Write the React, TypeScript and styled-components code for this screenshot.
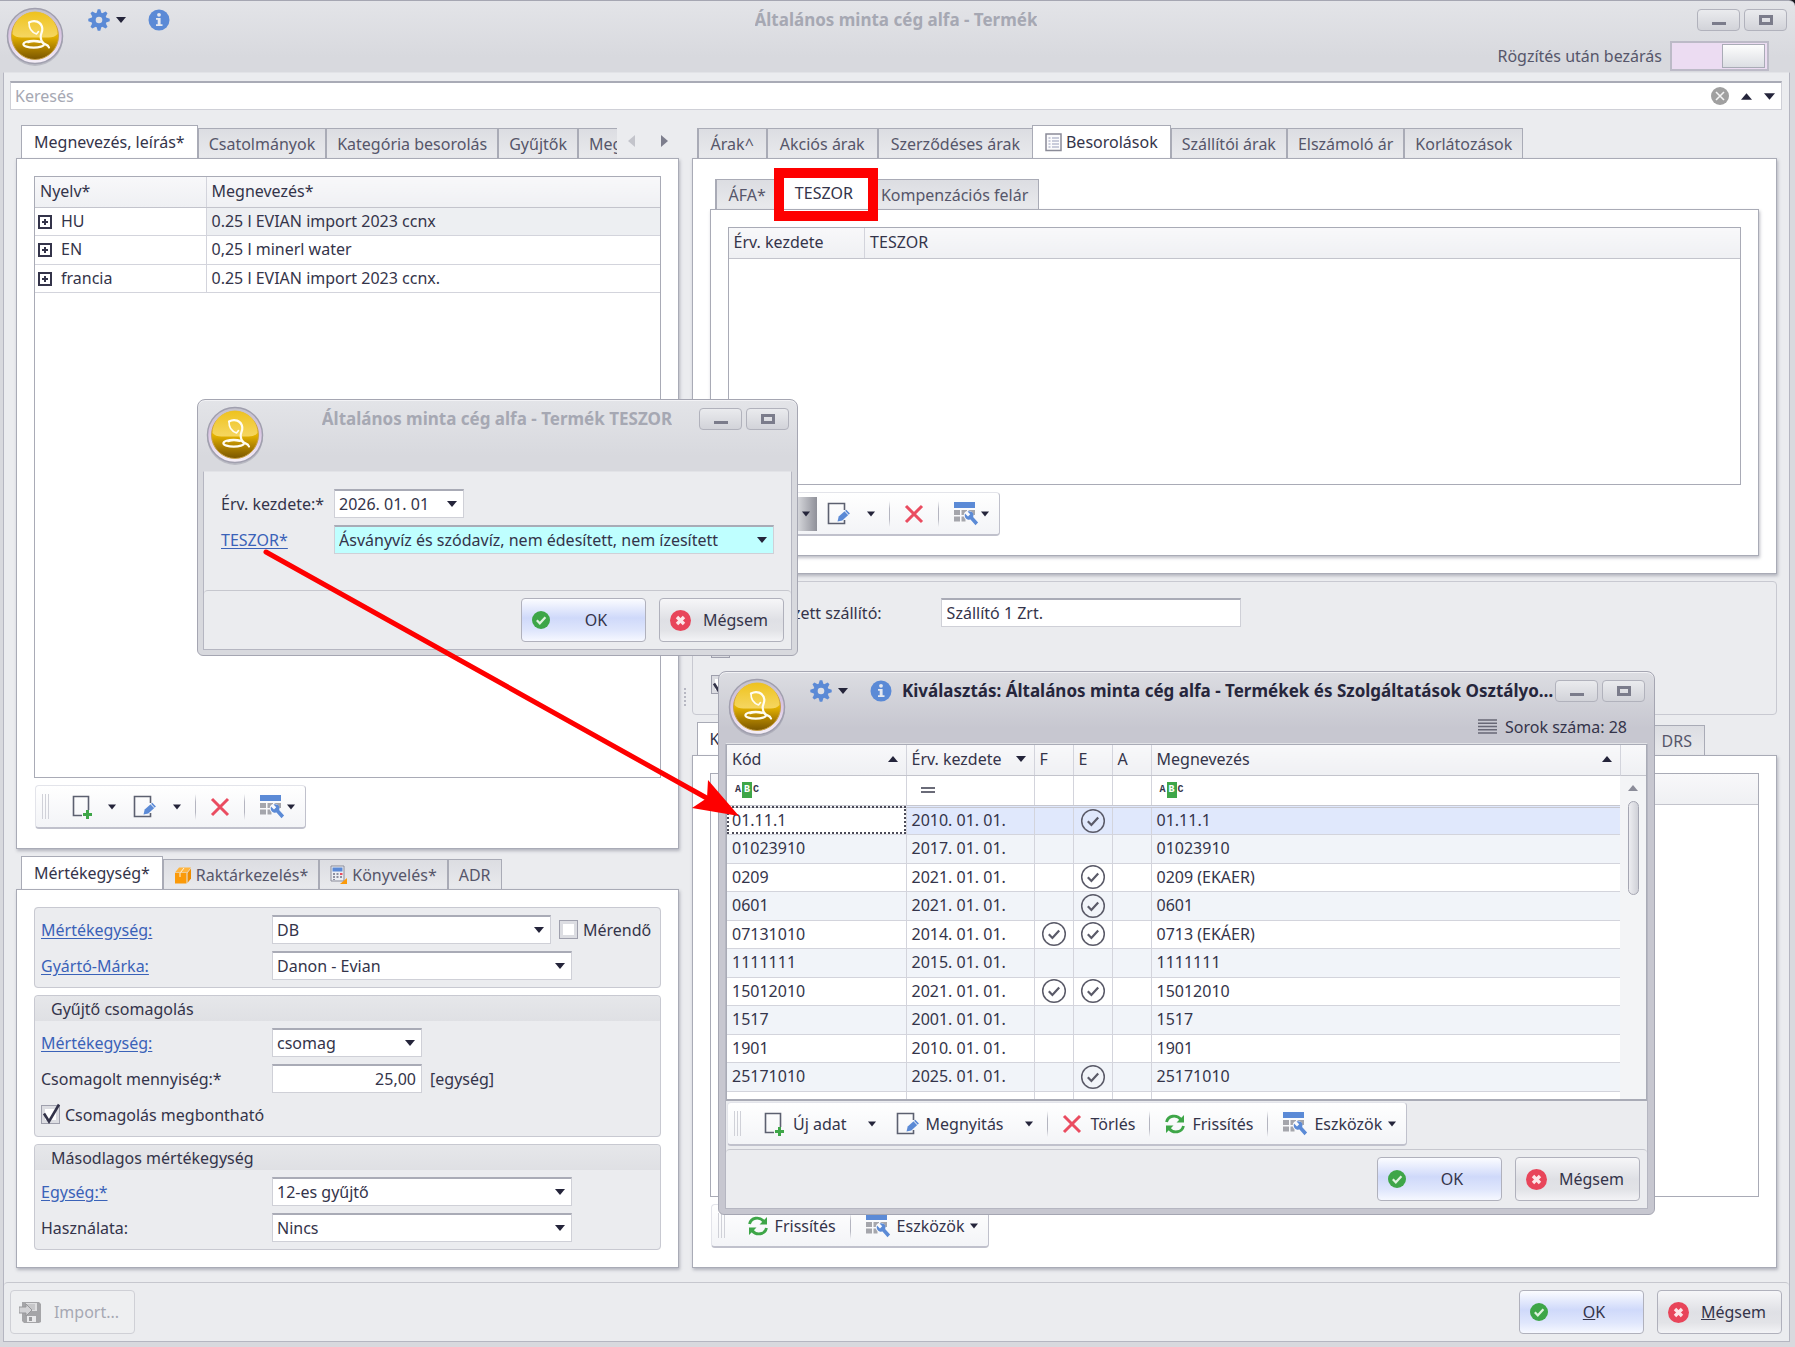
import React, { useId } from "react";
import styled, { createGlobalStyle, css } from "styled-components";

const c = {
  text: "#34344a",
  soft: "#56566a",
  muted: "#a6a8b3",
  line: "#a9abb6",
  thin: "#d3d4dc",
  face: "#ebecef",
  link: "#3a62b8",
  blue: "#5b8ad6",
  green: "#3ea648",
  red: "#ea4c60",
};

const Global = createGlobalStyle`
  *, *::before, *::after { box-sizing: border-box; }
  body { margin: 0; background: #16161c; }
  body, button, input, select {
    font-family: Tahoma, "Noto Sans", "Open Sans", sans-serif;
    font-size: 16px;
    line-height: 20px;
    color: ${c.text};
  }
  button, input, select { margin: 0; }
`;

/* ---------- icons ---------- */

const Svg = styled.svg`
  display: block;
  flex: none;
`;

const Caret = ({ up = false, size = 10, color = "#24243a" }: { up?: boolean; size?: number; color?: string }) => (
  <Svg width={size} height={size} viewBox="0 0 10 10" fill={color} aria-hidden="true">
    <path d={up ? "M0 8 5 2l5 6z" : "M0 2h10L5 8z"} />
  </Svg>
);

const SideCaret = ({ left = false }: { left?: boolean }) => (
  <Svg width="7" height="14" viewBox="0 0 7 14" fill={left ? "#c3c4cb" : "#7d7e8d"} aria-hidden="true">
    <path d={left ? "M7 1v12L0 7z" : "M0 1v12l7-6z"} />
  </Svg>
);

const GearIcon = () => (
  <Svg width="22" height="22" viewBox="-11 -11 22 22" aria-hidden="true">
    <g fill={c.blue}>
      {[0, 45, 90, 135].map((a) => (
        <path key={a} transform={`rotate(${a})`} d="M-2.4-7-1.3-10.7h2.6L2.4-7v14L1.3 10.7h-2.6L-2.4 7z" />
      ))}
      <circle r="7.6" />
    </g>
    <circle r="3.3" fill="#dedfe4" />
  </Svg>
);

const InfoIcon = () => (
  <Svg width="22" height="22" viewBox="0 0 22 22" aria-hidden="true">
    <circle cx="11" cy="11" r="10.5" fill={c.blue} />
    <circle cx="11" cy="5.8" r="1.9" fill="#e6e9f0" />
    <path d="M8 9h4.600v6.200H14.500V17H8v-1.800h1.700v-4.400H8z" fill="#e6e9f0" />
  </Svg>
);

const Logo = () => {
  const id = useId().replace(/[^a-zA-Z0-9]/g, "");
  return (
    <Svg width="60" height="62" viewBox="0 0 60 62" aria-hidden="true">
      <defs>
        <linearGradient id={`rim${id}`} x1="0" y1="0" x2="0" y2="1">
          <stop offset="0" stopColor="#c3c3cc" />
          <stop offset=".45" stopColor="#d9c4e2" />
          <stop offset="1" stopColor="#f6f0f8" />
        </linearGradient>
        <linearGradient id={`gold${id}`} x1="0" y1="0" x2="0" y2="1">
          <stop offset="0" stopColor="#e2b422" />
          <stop offset=".5" stopColor="#e6b400" />
          <stop offset=".72" stopColor="#b48600" />
          <stop offset="1" stopColor="#7a5600" />
        </linearGradient>
        <linearGradient id={`shine${id}`} x1="0" y1="0" x2="0" y2="1">
          <stop offset="0" stopColor="#f0c41c" />
          <stop offset="1" stopColor="#f7da6c" />
        </linearGradient>
      </defs>
      <circle cx="30" cy="32" r="28" fill="#8d8d9a" opacity=".4" />
      <circle cx="30" cy="30" r="27.500" fill={`url(#rim${id})`} stroke="#a09fae" strokeWidth="1.500" />
      <circle cx="30" cy="30" r="23.500" fill={`url(#gold${id})`} stroke="#c9a24a" />
      <path d="M7.500 28a22.500 22.500 0 0 1 45 0q-3 3.500-9 3.500h-27q-6 0-9-3.500z" fill={`url(#shine${id})`} opacity=".9" />
      <g fill="none" stroke="#fffdf2" strokeLinecap="round" strokeLinejoin="round">
        <path d="M24 16.500c5-2.800 12.300-1.500 13.300 6 .4 3.500-2 5.500-1.600 8.500.2 3 .8 5 2.800 6.500 2 1.300 4.500.8 5.500 4" strokeWidth="2.200" />
        <path d="M24 16.500c-.2 5.500 2.200 9.500 7.500 11.500l2-2.500" strokeWidth="1.600" />
        <ellipse cx="28.700" cy="38.200" rx="10.300" ry="3.400" strokeWidth="2.200" />
        <path d="M23 36.500q5-1.600 12-.3" strokeWidth="1.400" />
      </g>
    </Svg>
  );
};

const NewIcon = () => (
  <Svg width="24" height="26" viewBox="0 0 24 26" fill="none" aria-hidden="true">
    <path d="M11 21.500H2.500V2.500h15V16" stroke="#5c6070" strokeWidth="1.600" />
    <path d="M16.500 16v9M12 20.500h9" stroke={c.green} strokeWidth="3" />
  </Svg>
);

const EditIcon = () => (
  <Svg width="24" height="26" viewBox="0 0 24 26" fill="none" aria-hidden="true">
    <path d="M17.500 9V2.500h-16v20h16V19" stroke="#5c6070" strokeWidth="1.600" />
    <path d="m10.500 20.500 1.200-5 7.600-6.800 3.600 3.800-7.600 6.900z" fill={c.blue} />
    <path d="m17.700 10 3.700 3.900" stroke="#fff" />
  </Svg>
);

const DeleteIcon = () => (
  <Svg width="20" height="20" viewBox="0 0 20 20" aria-hidden="true">
    <path d="m2 2 16 16M18 2 2 18" stroke={c.red} strokeWidth="3" />
  </Svg>
);

const ToolsIcon = () => (
  <Svg width="26" height="26" viewBox="0 0 26 26" aria-hidden="true">
    <path d="M1 1h21v6H1z" fill={c.blue} />
    <path d="M1 9h6v5H1zM8.500 9H14v5H8.500zM15.500 9H22v5h-6.500zM1 15.500h6v5H1zM8.500 15.500h4v5h-4z" fill="#a5a6ac" />
    <circle cx="15.500" cy="14.500" r="4.800" fill="#fafafc" />
    <path d="M12 12.500 15 15.500l2.200-2.300-2.700-2.800c4.500-1.200 7 2.200 5.600 5.600l5 5.600-2.600 2.600-5-5.600C14 19.500 10.700 16.500 12 12.500z" fill={c.blue} />
  </Svg>
);

const RefreshIcon = () => (
  <Svg width="22" height="22" viewBox="0 0 22 22" fill="none" aria-hidden="true">
    <path d="M2.500 9C4 2.500 12.500 1 17 6.500M19.500 13C18 19.500 9.500 21 5 15.500" stroke={c.green} strokeWidth="2.800" />
    <path d="M20 2v7.500h-7.500zM2 20v-7.500h7.500z" fill={c.green} />
  </Svg>
);

const OkIcon = () => (
  <Svg width="18" height="18" viewBox="0 0 18 18" fill="none" aria-hidden="true">
    <circle cx="9" cy="9" r="9" fill={c.green} />
    <path d="m4.800 9.300 3 3 5.600-6" stroke="#dff3df" strokeWidth="2.200" />
  </Svg>
);

const CancelIcon = () => (
  <Svg width="21" height="21" viewBox="0 0 21 21" fill="none" aria-hidden="true">
    <circle cx="10.500" cy="10.500" r="10.500" fill="#e8455a" />
    <path d="m7 7 7 7M14 7l-7 7" stroke="#fde6e8" strokeWidth="3.400" />
  </Svg>
);

const ClearIcon = () => (
  <Svg width="18" height="18" viewBox="0 0 18 18" aria-hidden="true">
    <circle cx="9" cy="9" r="9" fill="#a0a0a0" />
    <path d="m5 5 8 8M13 5l-8 8" stroke="#f4f4f4" strokeWidth="1.600" />
  </Svg>
);

const CenteredSvg = styled(Svg)`
  margin: 0 auto;
`;

const CheckCircle = () => (
  <CenteredSvg width="26" height="26" viewBox="0 0 26 26" fill="none" stroke="#5a5a68" role="img" aria-label="igen">
    <circle cx="13" cy="13" r="11.300" strokeWidth="1.500" />
    <path d="m7.800 13.300 3.600 3.700 6.800-7.600" strokeWidth="2.200" />
  </CenteredSvg>
);

const ListIcon = () => (
  <Svg width="17" height="19" viewBox="0 0 17 19" fill="none" aria-hidden="true">
    <path d="M1 1h15v16.500H1z" fill="#fbfbfd" stroke="#8a8b98" strokeWidth="1.500" />
    <path d="M3.500 5h2M3.500 8h2M3.500 11h2M3.500 14h2M7 5h7M7 8h7M7 11h7M7 14h7" stroke="#b9bdd0" strokeWidth="1.400" />
  </Svg>
);

const BoxIcon = () => (
  <Svg width="18" height="18" viewBox="0 0 18 18" aria-hidden="true">
    <path d="M1 6.500 5 1.500h12l-4 5z" fill="#ffb43d" />
    <path d="M1 7h11.500v10.500H1z" fill="#fb9a09" />
    <path d="M13.500 7 17 2.500v10L13.500 17z" fill="#ee8c00" />
    <path d="M6 7v4M6.500 6.500 10 2" stroke="#fff3dd" />
  </Svg>
);

const CalcIcon = () => (
  <Svg width="18" height="20" viewBox="0 0 18 20" aria-hidden="true">
    <path d="M1 1h13v15H1z" fill="#eceef3" stroke="#8b8d9b" />
    <path d="M2.500 2.500h10v4h-10z" fill={c.blue} />
    <path d="M3 8h2v2H3zM6.500 8h2v2h-2zM3 11h2v2H3zM6.500 11h2v2h-2zM10 11h2v2h-2zM3 14h2v1H3z" fill="#8d90a0" />
    <path d="M10 8h2.500v2H10z" fill={c.red} />
    <path d="M17 13v6h-7z" fill="#fb9a09" />
  </Svg>
);

const ImportIcon = () => (
  <Svg width="23" height="23" viewBox="0 0 23 23" aria-hidden="true">
    <path d="M3 1h17l2 2v18l-2 1H5l-2-2z" fill="#a5a5a8" />
    <path d="M7 2h11v8H7z" fill="#dedee0" />
    <path d="M8 4h8M8 6h8M8 8h8" stroke="#b0b0b3" />
    <path d="M8 15h9v6H8z" fill="#e9e9eb" />
    <path d="M10 16h3v4h-3z" fill="#9a9a9d" />
    <path d="M0 6h7V3l6 6-6 6v-3H0z" fill="#d2d2d5" stroke="#97979a" />
  </Svg>
);

const RowsIcon = () => (
  <Svg width="19" height="15" viewBox="0 0 19 15" aria-hidden="true">
    <path d="M0 1h19M0 4.250h19M0 7.500h19M0 10.750h19M0 14h19" stroke="#686876" strokeWidth="1.600" />
  </Svg>
);

/* ---------- windows ---------- */

const WindowFrame = css<{ $active?: boolean }>`
  display: flex;
  flex-direction: column;
  background: ${(p) =>
    p.$active
      ? "linear-gradient(#dcdde2 0, #c7c7d0 56px, #c7c7d0 100%)"
      : "linear-gradient(#e3e4e8 0, #d8d9de 56px, #d8d9de 100%)"};
  border: 1px solid #a5a6b2;
`;

const MainWindow = styled.div`
  ${WindowFrame}
  min-height: 100vh;
  border-width: 1px 0 0;
  border-radius: 0 6px 0 0;
  padding: 0 5px 5px 3px;
`;

const Dialog = styled.section<{ $active?: boolean; $x: number; $y: number; $w: number; $h: number }>`
  ${WindowFrame}
  position: absolute;
  left: ${(p) => p.$x}px;
  top: ${(p) => p.$y}px;
  width: ${(p) => p.$w}px;
  height: ${(p) => p.$h}px;
  border-radius: 8px 8px 6px 6px;
  padding: 0 ${(p) => (p.$active ? 6 : 5)}px 5px;
  box-shadow: inset 0 1px 0 #f2f2f5;
`;

const TitleBar = styled.header<{ $wide?: boolean }>`
  display: grid;
  grid-template-columns: ${(p) => (p.$wide ? "auto minmax(0, 1fr) auto" : "1fr auto 1fr")};
  grid-template-rows: 38px 33px;
  align-items: center;
  padding: 0 3px 0 2px;
`;

const TitleTools = styled.div`
  grid-row: 1 / 3;
  display: flex;
  align-self: start;
  padding-top: 5px;
`;

const ToolPair = styled.div`
  display: flex;
  align-items: center;
  height: 28px;
  padding: 0 10px 0 23px;
  gap: 22px;
`;

const BareButton = styled.button`
  display: inline-flex;
  align-items: center;
  gap: 6px;
  border: 0;
  padding: 0;
  background: none;
  color: inherit;
`;

const Title = styled.h1<{ $dim?: boolean }>`
  margin: 0;
  font-size: 17px;
  line-height: 24px;
  font-weight: 700;
  color: ${(p) => (p.$dim ? c.muted : "#26263c")};
  overflow: hidden;
  white-space: nowrap;
  text-overflow: ellipsis;
`;

const WindowButtons = styled.div`
  display: flex;
  justify-content: flex-end;
  gap: 4px;
`;

const WindowButton = styled.button`
  display: flex;
  align-items: center;
  justify-content: center;
  width: 43px;
  height: 22px;
  padding: 0;
  border: 1px solid #b1b2bc;
  border-radius: 4px;
  background: linear-gradient(#eaebee, #d2d3d9);
`;

const TitleExtra = styled.div`
  grid-column: 2 / 4;
  display: flex;
  align-items: center;
  justify-content: flex-end;
  gap: 8px;
  padding-right: 18px;
`;

const SwitchLabel = styled.label`
  color: ${c.soft};
`;

const Switch = styled.input`
  appearance: none;
  width: 99px;
  height: 30px;
  padding: 2px;
  border: 2px solid #bcbac7;
  background: #ecdcf2;
  display: flex;
  justify-content: flex-end;
  &::before {
    content: "";
    width: 43px;
    height: 24px;
    margin-top: -1px;
    border: 1px solid #a9abb6;
    background: linear-gradient(#fdfdfd, #dcdee3);
  }
`;

const MinMax = () => (
  <WindowButtons>
    <WindowButton type="button" aria-label="Kis méret">
      <Svg width="14" height="14" viewBox="0 0 14 14" aria-hidden="true">
        <path d="M0 9h14v3H0z" fill="#7b7c8b" />
      </Svg>
    </WindowButton>
    <WindowButton type="button" aria-label="Teljes méret">
      <Svg width="14" height="12" viewBox="0 0 14 12" fill="none" aria-hidden="true">
        <path d="M1.500 2.500h11v7h-11z" stroke="#7b7c8b" strokeWidth="3" />
      </Svg>
    </WindowButton>
  </WindowButtons>
);

const HeaderTools = () => (
  <ToolPair>
    <BareButton type="button" aria-label="Beállítások">
      <GearIcon />
      <Caret />
    </BareButton>
    <BareButton type="button" aria-label="Információ">
      <InfoIcon />
    </BareButton>
  </ToolPair>
);

const Client = styled.div`
  flex: 1;
  min-height: 0;
  display: flex;
  flex-direction: column;
  border: 1px solid #b5b6c1;
  border-top-color: #e2e3e7;
  background: ${c.face};
`;

const Footer = styled.footer<{ $split?: boolean }>`
  display: flex;
  justify-content: ${(p) => (p.$split ? "space-between" : "flex-end")};
  border-top: 1px solid #c6c7ce;
  border-radius: 4px 4px 0 0;
  padding: 7px 7px 7px 6px;
`;

const ButtonPair = styled.div`
  display: flex;
  gap: 13px;
`;

const PushButton = styled.button<{ $primary?: boolean }>`
  display: flex;
  align-items: center;
  width: 125px;
  height: 44px;
  padding: 0 8px 0 ${(p) => (p.disabled ? 8 : 10)}px;
  border: 1px solid ${(p) => (p.disabled ? "#cfd0d6" : "#b0b1bc")};
  border-radius: 4px;
  background: ${(p) =>
    p.disabled
      ? "#eeeff1"
      : p.$primary
        ? "linear-gradient(#fbfcff 0, #cfd9fa 45%, #dfe6fc 75%, #f6f8ff 100%)"
        : "linear-gradient(#f6f6f8 0, #dfe0e5 50%, #e2e3e7 75%, #f3f3f6 100%)"};
  color: ${(p) => (p.disabled ? c.muted : c.text)};
`;

const PushLabel = styled.span`
  flex: 1;
  padding-left: 5px;
  text-align: center;
`;

const OkCancel = ({ keys = false }: { keys?: boolean }) => (
  <ButtonPair>
    <PushButton type="button" $primary>
      <OkIcon />
      <PushLabel>{keys ? <><u>O</u>K</> : "OK"}</PushLabel>
    </PushButton>
    <PushButton type="button">
      <CancelIcon />
      <PushLabel>{keys ? <><u>M</u>égsem</> : "Mégsem"}</PushLabel>
    </PushButton>
  </ButtonPair>
);

/* ---------- search ---------- */

const SearchBox = styled.form`
  display: flex;
  align-items: center;
  gap: 12px;
  height: 29px;
  margin: 8px 7px 0 6px;
  padding: 0 6px 0 4px;
  border: 1px solid #cfd0d7;
  border-top: 2px solid ${c.line};
  background: #fff;
`;

const SearchInput = styled.input`
  flex: 1;
  border: 0;
  outline: 0;
  padding: 0;
  background: none;
  &::placeholder { color: ${c.muted}; }
`;

/* ---------- page layout ---------- */

const Workspace = styled.main`
  flex: 1;
  display: grid;
  grid-template-columns: minmax(0, 663fr) 13px minmax(0, 1086fr);
  padding: 15px 12px 14px;
`;

const Column = styled.div`
  display: flex;
  flex-direction: column;
  gap: 7px;
  min-width: 0;
`;

const Splitter = styled.div`
  align-self: center;
  justify-self: center;
  width: 2px;
  height: 18px;
  border-left: 2px dotted #b6b7c2;
`;

/* ---------- tabs ---------- */

const TabGroup = styled.section<{ $grow?: boolean }>`
  display: flex;
  flex-direction: column;
  flex: ${(p) => (p.$grow ? "1 1 auto" : "none")};
`;

const TabStrip = styled.div`
  display: flex;
  align-items: flex-end;
  height: 33px;
  padding-left: 5px;
`;

const TabList = styled.div`
  display: flex;
  align-items: flex-end;
  min-width: 0;
  margin-bottom: -1px;
  overflow: hidden;
`;

const Tab = styled.button<{ $on?: boolean; $pad?: number }>`
  display: flex;
  align-items: center;
  flex: none;
  gap: 4px;
  height: ${(p) => (p.$on ? 34 : 31)}px;
  padding: 0 ${(p) => p.$pad ?? (p.$on ? 12 : 10)}px;
  border: 1px solid ${c.line};
  border-bottom-color: ${(p) => (p.$on ? "#fff" : c.line)};
  border-left-width: ${(p) => (p.$on ? 1 : 2)}px;
  background: ${(p) => (p.$on ? "#fff" : "linear-gradient(#dcdde2, #e9eaed)")};
  color: ${(p) => (p.$on ? c.text : c.soft)};
  white-space: nowrap;
  & + & { margin-left: -1px; }
`;

const TabPanel = styled.div<{ $foot?: boolean }>`
  flex: 1;
  display: flex;
  flex-direction: column;
  gap: 7px;
  padding: 17px 17px ${(p) => (p.$foot ? 19 : 17)}px;
  border: 1px solid ${c.line};
  background: #fff;
  box-shadow: 1px 2px 3px rgba(110, 112, 130, 0.45);
`;

const TabScroll = styled.div`
  display: flex;
  align-items: center;
  flex: none;
  gap: 26px;
  height: 32px;
  align-self: flex-start;
  margin-left: auto;
  padding: 0 11px 0 11px;
`;

const FarTabs = styled.div`
  display: flex;
  flex: 1;
  justify-content: flex-end;
  margin: 0 72px -1px 0;
`;

/* ---------- grids ---------- */

const GridBox = styled.div<{ $min?: number }>`
  flex: 1 1 auto;
  min-height: ${(p) => p.$min ?? 0}px;
  border: 1px solid ${c.line};
  background: #fff;
`;

const Table = styled.table`
  width: 100%;
  border-collapse: collapse;
  table-layout: fixed;
  th, td {
    padding: 0 4px 1px 5px;
    border: 0 solid ${c.thin};
    border-bottom-width: 1px;
    text-align: left;
    font-weight: 400;
    white-space: nowrap;
  }
  th + th, td + td { border-left-width: 1px; }
  th { height: 30px; background: linear-gradient(#f8f8fa, #eff0f3); border-bottom-color: #c3c4cc; }
  td { height: 28px; }
  tbody tr:nth-child(even) td { height: 29px; }
`;

const Col = styled.col<{ $w?: number }>`
  width: ${(p) => (p.$w ? `${p.$w}px` : "auto")};
`;

const HeadCell = styled.div`
  display: flex;
  align-items: center;
  justify-content: space-between;
  padding-right: 4px;
`;

const Expander = styled.button`
  display: inline-block;
  width: 14px;
  height: 14px;
  margin: 0 9px 0 -2px;
  padding: 0;
  vertical-align: 0;
  border: 2px solid #34344a;
  background:
    linear-gradient(#34344a, #34344a) center / 6px 2px no-repeat,
    linear-gradient(#34344a, #34344a) center / 2px 6px no-repeat,
    #fff;
`;

const Shade = styled.td`
  background: #edeff2;
`;

/* ---------- toolbars ---------- */

const Toolbar = styled.div`
  display: flex;
  align-items: center;
  align-self: flex-start;
  height: 44px;
  margin-left: 1px;
  padding: 0 10px 0 6px;
  border: 1px solid #e3e4ea;
  border-right-color: #c0c1cc;
  border-bottom: 2px solid #c0c1cc;
  border-radius: 4px;
  background: linear-gradient(#fff, #f3f4f7);
`;

const ListToolbar = styled(Toolbar)`
  margin: 1px 0 3px 1px;
`;

const Grip = styled.span`
  width: 8px;
  height: 25px;
  margin-right: 21px;
  background: repeating-linear-gradient(90deg, #d0d1d8 0 1px, transparent 1px 3px);
`;

const ToolButton = styled.button<{ $gap?: number }>`
  display: flex;
  align-items: center;
  gap: ${(p) => p.$gap ?? 6}px;
  padding: 0;
  border: 0;
  background: none;
`;

const DropButton = styled.button<{ $hot?: boolean; $before?: number; $after?: number }>`
  display: flex;
  align-items: center;
  justify-content: center;
  width: 22px;
  height: 34px;
  margin: 0 ${(p) => p.$after ?? 0}px 0 ${(p) => p.$before ?? 0}px;
  padding: 0;
  border: 0;
  background: ${(p) => (p.$hot ? "linear-gradient(90deg, #dfe0e4, #8f9099)" : "none")};
`;

const Sep = styled.span`
  width: 1px;
  height: 26px;
  margin: 0 14px;
  background: linear-gradient(transparent, #b4b5c0 30%, #b4b5c0 70%, transparent);
  ${DropButton} + & { margin-left: 7px; }
`;

const IconToolbar = ({ hot = false }: { hot?: boolean }) => (
  <Toolbar>
    <Grip />
    <ToolButton type="button" aria-label="Új adat"><NewIcon /></ToolButton>
    <DropButton type="button" aria-label="Új adat menü" $hot={hot} $before={6} $after={10}><Caret size={8} /></DropButton>
    <ToolButton type="button" aria-label="Megnyitás"><EditIcon /></ToolButton>
    <DropButton type="button" aria-label="Megnyitás menü" $before={9}><Caret size={8} /></DropButton>
    <Sep />
    <ToolButton type="button" aria-label="Törlés"><DeleteIcon /></ToolButton>
    <Sep />
    <ToolButton type="button" aria-label="Eszközök" $gap={2}><ToolsIcon /><Caret size={8} /></ToolButton>
  </Toolbar>
);

/* ---------- form parts ---------- */

const GroupBox = styled.fieldset`
  display: flex;
  flex-direction: column;
  min-width: 0;
  margin: 0;
  padding: 0;
  border: 1px solid #c8c9d1;
  border-radius: 4px;
  background: ${c.face};
`;

const GroupTitle = styled.div`
  height: 25px;
  padding: 3px 16px 2px;
  border-radius: 4px 4px 0 0;
  background: linear-gradient(#e6e7ea, #dfe0e4);
`;

const Fields = styled.div`
  display: flex;
  flex-direction: column;
  gap: 7px;
  padding: 7px 6px;
`;

const Field = styled.div`
  display: flex;
  align-items: center;
  gap: 8px;
  height: 29px;
`;

const FieldLabel = styled.label<{ $w?: number }>`
  flex: none;
  width: ${(p) => p.$w ?? 223}px;
  white-space: nowrap;
`;

const EndLabel = styled(FieldLabel)`
  display: flex;
  justify-content: flex-end;
  padding-right: 51px;
`;

const Link = styled.a`
  color: ${c.link};
  text-decoration: underline;
  text-underline-offset: 2px;
`;

const Box = css<{ $w?: number; $tint?: boolean }>`
  width: ${(p) => (p.$w ? `${p.$w}px` : "100%")};
  height: 29px;
  border: 1px solid #cfd0d7;
  border-top: 2px solid ${c.line};
  background: ${(p) => (p.$tint ? "#bfffff" : "#fff")};
`;

const Combo = styled.div<{ $w?: number; $tint?: boolean }>`
  ${Box}
  display: grid;
  grid-template-columns: minmax(0, 1fr) 23px;
  align-items: center;
  > * { grid-row: 1; }
  > svg { grid-column: 2; justify-self: center; pointer-events: none; }
`;

const ComboSelect = styled.select`
  grid-column: 1 / 3;
  appearance: none;
  height: 100%;
  width: 100%;
  padding: 0 24px 0 4px;
  border: 0;
  outline: 0;
  background: transparent;
`;

const TextBox = styled.input<{ $w?: number; $tint?: boolean; $num?: boolean }>`
  ${Box}
  padding: 0 5px;
  outline: 0;
  text-align: ${(p) => (p.$num ? "right" : "left")};
`;

const CheckLabel = styled.label`
  display: flex;
  align-items: center;
  gap: 5px;
  white-space: nowrap;
`;

const CheckWrap = styled.span`
  display: grid;
  > * { grid-area: 1 / 1; }
  > svg { pointer-events: none; }
`;

const CheckInput = styled.input`
  appearance: none;
  width: 19px;
  height: 19px;
  border: 1px solid #9fa0ad;
  background: #fff;
  box-shadow: inset 0 0 0 3px #dcdde2;
`;

const Check = ({ label, on = false }: { label: string; on?: boolean }) => (
  <CheckLabel>
    <CheckWrap>
      <CheckInput type="checkbox" defaultChecked={on} />
      {on && (
        <Svg width="19" height="19" viewBox="0 0 19 19" fill="none" overflow="visible" aria-hidden="true">
          <path d="M3 8.500 8 16.500 18-.5" stroke="#34344a" strokeWidth="2.600" />
        </Svg>
      )}
    </CheckWrap>
    {label}
  </CheckLabel>
);

type ComboProps = { id: string; value: string; w?: number; tint?: boolean };
const ComboBox = ({ id, value, w, tint }: ComboProps) => (
  <Combo $w={w} $tint={tint}>
    <ComboSelect id={id} defaultValue={value}>
      <option>{value}</option>
    </ComboSelect>
    <Caret />
  </Combo>
);

type LabelProps = { id: string; w?: number; children: React.ReactNode };

const LinkLabel = ({ id, w, children }: LabelProps) => (
  <FieldLabel $w={w} htmlFor={id}>
    <Link href="#">{children}</Link>
  </FieldLabel>
);

const PlainLabel = ({ id, w, children }: LabelProps) => (
  <FieldLabel $w={w} htmlFor={id}>{children}</FieldLabel>
);

const DialogRows = styled.div`
  display: flex;
  flex: 1;
  flex-direction: column;
  gap: 7px;
  padding: 17px;
`;

const SupplierRows = styled.div`
  display: flex;
  flex-direction: column;
  gap: 7px;
  padding: 16px 18px 15px;
`;

/* ---------- selection list ---------- */

const ListArea = styled.div`
  flex: 1;
  min-height: 0;
  display: grid;
  grid-template-columns: minmax(0, 1fr) 26px;
  overflow: hidden;
  border: 1px solid ${c.line};
  border-width: 1px 1px 2px;
  background: #fff;
`;

const ListTable = styled(Table)`
  tbody td:nth-child(n + 3):nth-child(-n + 5) { padding: 0; }
  tbody tr:nth-child(even) td { background: #f1f4f9; }
`;

const FilterRow = styled.tr`
  && td { height: 31px; border-bottom: 3px double #c6c7cf; background: #fff; }
`;

const Row = styled.tr<{ $on?: boolean }>`
  ${(p) => p.$on && css`&& td { background: #e0e8fc; }`}
  ${(p) => p.$on && css`&& td:first-child { background: #fff; outline: 2px dotted #4a4a58; outline-offset: -2px; }`}
`;

const Abc = styled.span`
  display: flex;
  align-items: center;
  gap: 1px;
  margin-left: 3px;
  font-family: "Liberation Mono", monospace;
  font-size: 10px;
  line-height: 16px;
  font-weight: 700;
`;

const AbcMid = styled.span`
  width: 10px;
  text-align: center;
  background: ${c.green};
  color: #fff;
`;

const EqualSign = styled.span`
  display: block;
  width: 14px;
  height: 6px;
  margin-left: 9px;
  border: solid #6a6b78;
  border-width: 2px 0;
`;

const ScrollCap = styled.div`
  height: 31px;
  border-left: 1px solid ${c.thin};
  border-bottom: 1px solid #c3c4cc;
  background: linear-gradient(#f8f8fa, #eff0f3);
`;

const ScrollColumn = styled.div`
  display: flex;
  flex-direction: column;
`;

const ScrollTrack = styled.div`
  flex: 1;
  display: flex;
  flex-direction: column;
  align-items: center;
  justify-content: space-between;
  padding: 7px 0;
  background: #f3f4f6;
`;

const ScrollTop = styled.div`
  display: flex;
  flex-direction: column;
  align-items: center;
  gap: 8px;
`;

const ScrollThumb = styled.div`
  width: 11px;
  height: 94px;
  border: 1px solid #a5a6b2;
  border-radius: 6px;
  background: linear-gradient(90deg, #ededf1, #d0d1d8);
`;

const AbcMark = () => (
  <Abc>
    <span>A</span>
    <AbcMid>B</AbcMid>
    <span>C</span>
  </Abc>
);

const rows: [string, string, boolean, boolean, string][] = [
  ["01.11.1", "2010. 01. 01.", false, true, "01.11.1"],
  ["01023910", "2017. 01. 01.", false, false, "01023910"],
  ["0209", "2021. 01. 01.", false, true, "0209 (EKAER)"],
  ["0601", "2021. 01. 01.", false, true, "0601"],
  ["07131010", "2014. 01. 01.", true, true, "0713 (EKÁER)"],
  ["1111111", "2015. 01. 01.", false, false, "1111111"],
  ["15012010", "2021. 01. 01.", true, true, "15012010"],
  ["1517", "2001. 01. 01.", false, false, "1517"],
  ["1901", "2010. 01. 01.", false, false, "1901"],
  ["25171010", "2025. 01. 01.", false, true, "25171010"],
  ["", "", false, false, ""],
];

const names: [string, string][] = [
  ["HU", "0.25 l EVIAN import 2023 ccnx"],
  ["EN", "0,25 l minerl water"],
  ["francia", "0.25 l EVIAN import 2023 ccnx."],
];

/* ---------- annotations ---------- */

const Highlight = styled.div`
  position: absolute;
  left: 774px;
  top: 168px;
  width: 104px;
  height: 53px;
  border: 10px solid #fe0000;
  pointer-events: none;
`;

const Pointer = styled.svg`
  position: absolute;
  left: 0;
  top: 0;
  pointer-events: none;
`;

/* ---------- sections ---------- */

const NamesSection = () => (
  <TabGroup $grow>
    <TabStrip>
      <TabList role="tablist">
        <Tab role="tab" $on>Megnevezés, leírás*</Tab>
        <Tab role="tab">Csatolmányok</Tab>
        <Tab role="tab">Kategória besorolás</Tab>
        <Tab role="tab">Gyűjtők</Tab>
        <Tab role="tab">Megjegyzés</Tab>
      </TabList>
      <TabScroll>
        <BareButton type="button" aria-label="Előző fülek"><SideCaret left /></BareButton>
        <BareButton type="button" aria-label="Következő fülek"><SideCaret /></BareButton>
      </TabScroll>
    </TabStrip>
    <TabPanel $foot>
      <GridBox>
        <Table>
          <colgroup>
            <Col $w={171} />
            <Col />
          </colgroup>
          <thead>
            <tr><th>Nyelv*</th><th>Megnevezés*</th></tr>
          </thead>
          <tbody>
            {names.map(([lang, name], i) => (
              <tr key={lang}>
                <td><Expander type="button" aria-label="Kibontás" />{lang}</td>
                {i === 0 ? <Shade>{name}</Shade> : <td>{name}</td>}
              </tr>
            ))}
          </tbody>
        </Table>
      </GridBox>
      <IconToolbar />
    </TabPanel>
  </TabGroup>
);

const UnitSection = () => (
  <TabGroup>
    <TabStrip>
      <TabList role="tablist">
        <Tab role="tab" $on>Mértékegység*</Tab>
        <Tab role="tab"><BoxIcon />Raktárkezelés*</Tab>
        <Tab role="tab"><CalcIcon />Könyvelés*</Tab>
        <Tab role="tab">ADR</Tab>
      </TabList>
    </TabStrip>
    <TabPanel>
      <GroupBox>
        <Fields>
          <Field>
            <LinkLabel id="unit">Mértékegység:</LinkLabel>
            <ComboBox id="unit" value="DB" w={279} />
            <Check label="Mérendő" />
          </Field>
          <Field>
            <LinkLabel id="brand">Gyártó-Márka:</LinkLabel>
            <ComboBox id="brand" value="Danon - Evian" w={300} />
          </Field>
        </Fields>
      </GroupBox>
      <GroupBox>
        <GroupTitle>Gyűjtő csomagolás</GroupTitle>
        <Fields>
          <Field>
            <LinkLabel id="pack">Mértékegység:</LinkLabel>
            <ComboBox id="pack" value="csomag" w={150} />
          </Field>
          <Field>
            <PlainLabel id="amount">Csomagolt mennyiség:*</PlainLabel>
            <TextBox id="amount" $w={150} $num defaultValue="25,00" />
            <span>[egység]</span>
          </Field>
          <Field>
            <Check label="Csomagolás megbontható" on />
          </Field>
        </Fields>
      </GroupBox>
      <GroupBox>
        <GroupTitle>Másodlagos mértékegység</GroupTitle>
        <Fields>
          <Field>
            <LinkLabel id="second">Egység:*</LinkLabel>
            <ComboBox id="second" value="12-es gyűjtő" w={300} />
          </Field>
          <Field>
            <PlainLabel id="usage">Használata:</PlainLabel>
            <ComboBox id="usage" value="Nincs" w={300} />
          </Field>
        </Fields>
      </GroupBox>
    </TabPanel>
  </TabGroup>
);

const ClassSection = () => (
  <TabGroup>
    <TabStrip>
      <TabList role="tablist">
        <Tab role="tab" $pad={12}>Árak^</Tab>
        <Tab role="tab" $pad={12}>Akciós árak</Tab>
        <Tab role="tab" $pad={12}>Szerződéses árak</Tab>
        <Tab role="tab" $on><ListIcon />Besorolások</Tab>
        <Tab role="tab">Szállítói árak</Tab>
        <Tab role="tab">Elszámoló ár</Tab>
        <Tab role="tab">Korlátozások</Tab>
      </TabList>
    </TabStrip>
    <TabPanel>
      <TabGroup>
        <TabStrip>
          <TabList role="tablist">
            <Tab role="tab" $pad={12}>ÁFA*</Tab>
            <Tab role="tab" $on $pad={16}>TESZOR</Tab>
            <Tab role="tab">Kompenzációs felár</Tab>
          </TabList>
        </TabStrip>
        <TabPanel $foot>
          <GridBox $min={258}>
            <Table>
              <colgroup>
                <Col $w={136} />
                <Col />
              </colgroup>
              <thead>
                <tr><th>Érv. kezdete</th><th>TESZOR</th></tr>
              </thead>
            </Table>
          </GridBox>
          <IconToolbar hot />
        </TabPanel>
      </TabGroup>
    </TabPanel>
  </TabGroup>
);

const SupplierSection = () => (
  <GroupBox>
    <SupplierRows>
      <Field>
        <EndLabel htmlFor="supplier" $w={222}>Alapértelmezett szállító:</EndLabel>
        <TextBox id="supplier" $w={300} defaultValue="Szállító 1 Zrt." />
      </Field>
      <Field><Check label="Heti" /></Field>
      <Field><Check label="Aktív" on /></Field>
    </SupplierRows>
  </GroupBox>
);

const StockSection = () => (
  <TabGroup $grow>
    <TabStrip>
      <TabList role="tablist">
        <Tab role="tab" $on>Készlet</Tab>
      </TabList>
      <FarTabs>
        <Tab role="tab" $pad={12}>DRS</Tab>
      </FarTabs>
    </TabStrip>
    <TabPanel $foot>
      <GridBox>
        <Table>
          <thead>
            <tr><th aria-label="Raktár" /></tr>
          </thead>
        </Table>
      </GridBox>
      <Toolbar>
        <Grip />
        <ToolButton type="button"><RefreshIcon />Frissítés</ToolButton>
        <Sep />
        <ToolButton type="button"><ToolsIcon />Eszközök<Caret size={8} /></ToolButton>
      </Toolbar>
    </TabPanel>
  </TabGroup>
);

const TeszorDialog = () => (
  <Dialog $x={197} $y={399} $w={601} $h={257} role="dialog" aria-label="Termék TESZOR">
    <TitleBar>
      <TitleTools><Logo /></TitleTools>
      <Title as="h2" $dim>Általános minta cég alfa - Termék TESZOR</Title>
      <MinMax />
    </TitleBar>
    <Client>
      <DialogRows>
        <Field>
          <PlainLabel id="from" w={105}>Érv. kezdete:*</PlainLabel>
          <ComboBox id="from" value="2026. 01. 01" w={130} />
        </Field>
        <Field>
          <LinkLabel id="teszor" w={105}>TESZOR*</LinkLabel>
          <ComboBox id="teszor" value="Ásványvíz és szódavíz, nem édesített, nem ízesített" tint />
        </Field>
      </DialogRows>
      <Footer><OkCancel /></Footer>
    </Client>
  </Dialog>
);

const PickerDialog = () => (
  <Dialog $active $x={718} $y={671} $w={937} $h={544} role="dialog" aria-label="Kiválasztás">
    <TitleBar $wide>
      <TitleTools><Logo /><HeaderTools /></TitleTools>
      <Title as="h2">Kiválasztás: Általános minta cég alfa - Termékek és Szolgáltatások Osztályozási Rendszere</Title>
      <MinMax />
      <TitleExtra><RowsIcon />Sorok száma: 28</TitleExtra>
    </TitleBar>
    <Client>
      <ListArea>
        <ListTable>
          <colgroup>
            <Col $w={179} />
            <Col $w={128} />
            <Col $w={39} />
            <Col $w={39} />
            <Col $w={39} />
            <Col />
          </colgroup>
          <thead>
            <tr>
              <th><HeadCell>Kód<Caret up /></HeadCell></th>
              <th><HeadCell>Érv. kezdete<Caret /></HeadCell></th>
              <th>F</th>
              <th>E</th>
              <th>A</th>
              <th><HeadCell>Megnevezés<Caret up /></HeadCell></th>
            </tr>
            <FilterRow>
              <td><AbcMark /></td>
              <td><EqualSign /></td>
              <td />
              <td />
              <td />
              <td><AbcMark /></td>
            </FilterRow>
          </thead>
          <tbody>
            {rows.map(([code, date, f, e, name], i) => (
              <Row key={i} $on={i === 0}>
                <td>{code}</td>
                <td>{date}</td>
                <td>{f && <CheckCircle />}</td>
                <td>{e && <CheckCircle />}</td>
                <td />
                <td>{name}</td>
              </Row>
            ))}
          </tbody>
        </ListTable>
        <ScrollColumn>
          <ScrollCap />
          <ScrollTrack>
            <ScrollTop>
              <Caret up color="#8b8c99" />
              <ScrollThumb />
            </ScrollTop>
            <Caret color="#8b8c99" />
          </ScrollTrack>
        </ScrollColumn>
      </ListArea>
      <ListToolbar>
        <Grip />
        <ToolButton type="button"><NewIcon />Új adat</ToolButton>
        <DropButton type="button" aria-label="Új adat menü" $before={14} $after={13}><Caret size={8} /></DropButton>
        <ToolButton type="button"><EditIcon />Megnyitás</ToolButton>
        <DropButton type="button" aria-label="Megnyitás menü" $before={14}><Caret size={8} /></DropButton>
        <Sep />
        <ToolButton type="button" $gap={9}><DeleteIcon />Törlés</ToolButton>
        <Sep />
        <ToolButton type="button"><RefreshIcon />Frissítés</ToolButton>
        <Sep />
        <ToolButton type="button"><ToolsIcon />Eszközök<Caret size={8} /></ToolButton>
      </ListToolbar>
      <Footer><OkCancel /></Footer>
    </Client>
  </Dialog>
);

export default function App() {
  return (
    <>
      <Global />
      <MainWindow>
        <TitleBar>
          <TitleTools><Logo /><HeaderTools /></TitleTools>
          <Title $dim>Általános minta cég alfa - Termék</Title>
          <MinMax />
          <TitleExtra>
            <SwitchLabel htmlFor="autoclose">Rögzítés után bezárás</SwitchLabel>
            <Switch id="autoclose" type="checkbox" role="switch" defaultChecked />
          </TitleExtra>
        </TitleBar>
        <Client>
          <SearchBox>
            <SearchInput type="search" placeholder="Keresés" aria-label="Keresés" />
            <BareButton type="button" aria-label="Törlés"><ClearIcon /></BareButton>
            <BareButton type="button" aria-label="Előző"><Caret up size={11} /></BareButton>
            <BareButton type="button" aria-label="Következő"><Caret size={11} /></BareButton>
          </SearchBox>
          <Workspace>
            <Column>
              <NamesSection />
              <UnitSection />
            </Column>
            <Splitter />
            <Column>
              <ClassSection />
              <SupplierSection />
              <StockSection />
            </Column>
          </Workspace>
          <Footer $split>
            <PushButton type="button" disabled><ImportIcon /><PushLabel>Import...</PushLabel></PushButton>
            <OkCancel keys />
          </Footer>
        </Client>
      </MainWindow>
      <TeszorDialog />
      <PickerDialog />
      <Highlight />
      <Pointer width="760" height="830" viewBox="0 0 760 830" aria-hidden="true">
        <path d="M266 552 712 801" stroke="#fe0000" strokeWidth="5" strokeLinecap="round" />
        <path d="M739 816 708 780 707 798 692 808z" fill="#fe0000" />
      </Pointer>
    </>
  );
}
